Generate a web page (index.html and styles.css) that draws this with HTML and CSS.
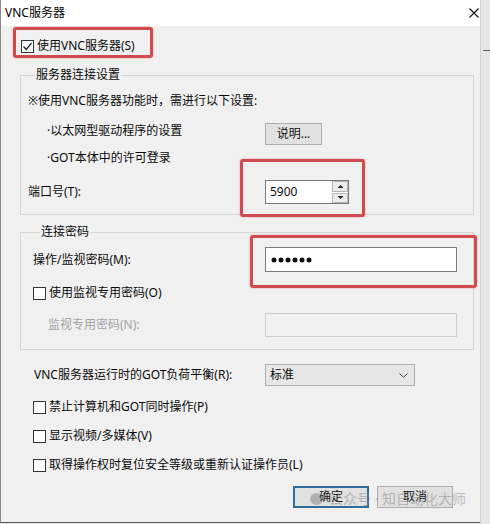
FILE: index.html
```html
<!DOCTYPE html>
<html lang="zh-CN">
<head>
<meta charset="utf-8">
<title>VNC服务器</title>
<link rel="stylesheet" href="styles.css">
</head>
<body>
<div class="screen">
  <div class="window">
    <div class="titlebar">
      <span class="title">VNC服务器</span>
      <svg class="close" width="10" height="10" viewBox="0 0 10 10"><path d="M0.5 0.5 L9.5 9.5 M9.5 0.5 L0.5 9.5" stroke="#111" stroke-width="1.1" fill="none"/></svg>
    </div>
    <div class="content">
      <div class="row main-check">
        <span class="cb"><svg width="11" height="11" viewBox="0 0 11 11"><path d="M1.5 5.5 L4.3 8.5 L9.6 1.8" stroke="#222" stroke-width="1.3" fill="none"/></svg></span>
        <span>使用VNC服务器(S)</span>
      </div>

      <div class="group g1">
        <div class="legend">服务器连接设置</div>
        <div class="row r1">※使用VNC服务器功能时，需进行以下设置:</div>
        <div class="row r2"><span class="label indent">·以太网型驱动程序的设置</span><span class="btn btn-info">说明...</span></div>
        <div class="row r3"><span class="indent">·GOT本体中的许可登录</span></div>
        <div class="row r4">
          <span class="label">端口号(T):</span>
          <div class="spin">
            <span class="spin-val">5900</span>
            <span class="spin-btns">
              <span class="sb"><svg width="7" height="5" viewBox="0 0 7 5"><path d="M0.5 4 L3.5 1 L6.5 4 Z" fill="#222"/></svg></span>
              <span class="sb"><svg width="7" height="5" viewBox="0 0 7 5"><path d="M0.5 1 L3.5 4 L6.5 1 Z" fill="#222"/></svg></span>
            </span>
          </div>
        </div>
      </div>

      <div class="group g2">
        <div class="legend">连接密码</div>
        <div class="row ra">
          <span class="label">操作/监视密码(M):</span>
          <div class="input pwd">
            <svg width="44" height="6" viewBox="0 0 44 6"><circle cx="3" cy="3" r="2.5"/><circle cx="10" cy="3" r="2.5"/><circle cx="17" cy="3" r="2.5"/><circle cx="24" cy="3" r="2.5"/><circle cx="31" cy="3" r="2.5"/><circle cx="38" cy="3" r="2.5"/></svg>
          </div>
        </div>
        <div class="row rb"><span class="cb"></span><span>使用监视专用密码(O)</span></div>
        <div class="row rc">
          <span class="label disabled sub">监视专用密码(N):</span>
          <div class="input input-disabled"></div>
        </div>
      </div>

      <div class="row sel-row">
        <span class="label">VNC服务器运行时的GOT负荷平衡(R):</span>
        <div class="select">
          <span>标准</span>
          <svg width="9" height="5" viewBox="0 0 9 5"><path d="M0.5 0.5 L4.5 4.3 L8.5 0.5" stroke="#444" stroke-width="1" fill="none"/></svg>
        </div>
      </div>
      <div class="row ck ck1"><span class="cb"></span><span>禁止计算机和GOT同时操作(P)</span></div>
      <div class="row ck ck2"><span class="cb"></span><span>显示视频/多媒体(V)</span></div>
      <div class="row ck ck3"><span class="cb"></span><span>取得操作权时复位安全等级或重新认证操作员(L)</span></div>

      <div class="row actions">
        <span class="btn btn-ok">确定</span>
        <span class="btn btn-cancel">取消</span>
      </div>
    </div>

    <div class="mark mark-1"></div>
    <div class="mark mark-2"></div>
    <div class="mark mark-3"></div>

    <div class="watermark"><span class="wm-dot"></span><span>公众号 · 知自动化大师</span></div>
  </div>
  <div class="side"><div class="side-line"></div></div>
</div>
</body>
</html>
```

FILE: styles.css
```css
* { box-sizing: border-box; }

html, body {
  margin: 0;
  padding: 0;
}

body {
  width: 490px;
  height: 524px;
  overflow: hidden;
  background: #e4e4e4;
  font-family: "Noto Sans", "Noto Sans CJK SC", sans-serif;
  font-size: 12px;
  line-height: 20px;
  color: #0a0a0a;
}

.screen {
  display: flex;
  width: 490px;
  height: 524px;
}

.window {
  position: relative;
  width: 480px;
  height: 523px;
  border-left: 1px solid #8a8a8a;
  border-bottom: 1px solid #555;
  background: #f0f0f0;
  display: flex;
  flex-direction: column;
}

.side {
  flex: 1;
  background: #e6e6e6;
  border-left: 1px solid #d0d0d0;
}

.side-line {
  margin-top: 50px;
  margin-left: 2px;
  border-top: 1px solid #555;
}

.titlebar {
  height: 26px;
  background: #fff;
  display: flex;
  align-items: center;
  justify-content: space-between;
  padding: 0 1px 0 4px;
}

.title {
  line-height: 26px;
  color: #000;
}

.close { display: block; }

.content {
  flex: 1;
  display: flex;
  flex-direction: column;
}

.row {
  display: flex;
  align-items: center;
  height: 20px;
  white-space: nowrap;
}

.cb {
  width: 13px;
  height: 13px;
  border: 1px solid #333;
  background: #fff;
  margin-right: 3px;
  flex: none;
  display: flex;
  align-items: center;
  justify-content: center;
}

.main-check {
  margin-top: 10px;
  margin-left: 20px;
}

.group {
  display: flex;
  flex-direction: column;
  margin-left: 19px;
  width: 454px;
  border: 1px solid #d5d5d5;
}

.legend {
  align-self: flex-start;
  margin-top: -9px;
  margin-left: 7px;
  line-height: 16px;
  height: 16px;
  background: #f0f0f0;
  padding: 0 1px;
}

.g1 {
  margin-top: 19px;
  padding: 0 0 10px 7px;
}

.g1 .label { width: 237px; flex: none; }

.indent { padding-left: 19px; }

.r1 { margin-top: 8px; }

.r2 {
  margin-top: 10px;
  height: 24px;
  align-items: flex-start;
}

.r2 .btn-info { margin-top: 2px; }

.r3 { margin-top: 3px; }

.r4 {
  margin-top: 12px;
  height: 24px;
}

.btn {
  display: flex;
  align-items: center;
  justify-content: center;
  height: 22px;
  background: #e1e1e1;
  border: 1px solid #adadad;
  color: #111;
}

.btn-info { width: 57px; }

.spin {
  width: 84px;
  height: 24px;
  background: #fff;
  border: 1px solid #7a7a7a;
  display: flex;
  align-items: center;
  justify-content: space-between;
  padding-left: 4px;
}

.spin-btns {
  display: flex;
  flex-direction: column;
  gap: 1px;
  width: 16px;
  height: 22px;
}

.sb {
  flex: 1;
  background: #ececec;
  border: 1px solid #b5b5b5;
  display: flex;
  align-items: center;
  justify-content: center;
}

.sb svg { display: block; }

.g2 {
  margin-top: 17px;
  padding: 0 0 12px 12px;
}

.g2 .label { width: 232px; flex: none; }

.g2 .label.sub { padding-left: 15px; }

.ra {
  margin-top: 7px;
  height: 25px;
}

.rb { margin-top: 11px; }

.rc {
  margin-top: 10px;
  height: 24px;
}

.input {
  width: 192px;
  background: #fff;
  border: 1px solid #7a7a7a;
}

.pwd {
  height: 25px;
  display: flex;
  align-items: center;
  padding-left: 5px;
}

.pwd svg { display: block; fill: #111; }

.input-disabled {
  height: 24px;
  background: #f0f0f0;
  border-color: #cdcdcd;
}

.disabled { color: #a3a3a3; }

.sel-row {
  margin-top: 14px;
  margin-left: 33px;
  height: 22px;
}

.sel-row .label { width: 231px; flex: none; }

.select {
  width: 150px;
  height: 22px;
  background: #e6e6e6;
  border: 1px solid #adadad;
  display: flex;
  align-items: center;
  justify-content: space-between;
  padding: 0 6px 0 4px;
}

.select svg { display: block; }

.ck { margin-left: 32px; }
.ck1 { margin-top: 11px; }
.ck2 { margin-top: 9px; }
.ck3 { margin-top: 9px; }

.actions {
  margin-top: 11px;
  height: 22px;
  padding-left: 292px;
  gap: 8px;
}

.btn-ok {
  width: 76px;
  border: 2px solid #2e6d9a;
}

.btn-cancel { width: 76px; }

.mark {
  position: absolute;
  border: 3px solid #d14a4c;
  border-radius: 3px;
  box-shadow: 0 0 2px rgba(209, 74, 76, 0.55);
}

.mark-1 { left: 12px; top: 27px; width: 140px; height: 31px; }
.mark-2 { left: 239px; top: 159px; width: 125px; height: 58px; }
.mark-3 { left: 249px; top: 235px; width: 227px; height: 53px; }

.watermark {
  position: absolute;
  left: 309px;
  top: 489px;
  display: flex;
  align-items: center;
  gap: 6px;
  font-size: 14px;
  line-height: 20px;
  color: rgba(140, 140, 140, 0.55);
  white-space: nowrap;
}

.wm-dot {
  width: 13px;
  height: 12px;
  border-radius: 50%;
  background: rgba(120, 120, 120, 0.45);
}
```
